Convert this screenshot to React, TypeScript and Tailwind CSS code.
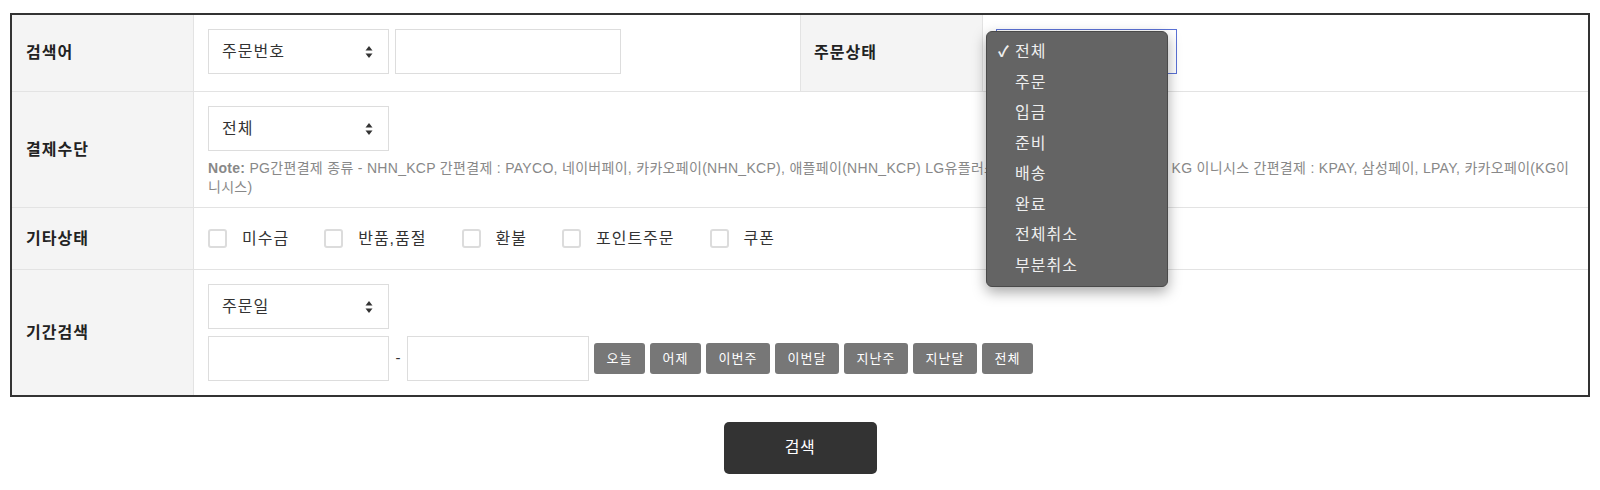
import React from "react";

function Arrows() {
  return (
    <svg width="8" height="14" viewBox="0 0 8 14" className="shrink-0">
      <path d="M0.5 5.5 L4 1 L7.5 5.5 Z" fill="#333" />
      <path d="M0.5 8.5 L4 13 L7.5 8.5 Z" fill="#333" />
    </svg>
  );
}

function FakeSelect({ value, focused }: { value: string; focused?: boolean }) {
  return (
    <div
      className={
        focused
          ? "w-[181px] h-[45px] shrink-0 border border-[#5b72d6] bg-white"
          : "w-[181px] h-[45px] shrink-0 border border-[#dddddd] bg-white flex items-center justify-between pl-[13px] pr-[15px] text-[16px] tracking-[1px] text-[#333]"
      }
    >
      {focused ? null : (
        <>
          <span>{value}</span>
          <Arrows />
        </>
      )}
    </div>
  );
}

function Label({ children, extra }: { children: React.ReactNode; extra?: string }) {
  return (
    <div
      className={
        "shrink-0 bg-[#f4f4f4] border-r border-[#e3e3e3] flex items-center font-bold text-[16px] tracking-[1px] text-[#222] " +
        (extra ?? "w-[182px] pl-[14px]")
      }
    >
      {children}
    </div>
  );
}

function Check({ label }: { label: string }) {
  return (
    <div className="flex items-center">
      <span className="w-[19px] h-[19px] border-2 border-[#dcdcdc] rounded-[3px] bg-white" />
      <span className="ml-[15px] text-[16px] tracking-[1px] text-[#333]">{label}</span>
    </div>
  );
}

const statusItems = ["전체", "주문", "입금", "준비", "배송", "완료", "전체취소", "부분취소"];
const quickButtons = [
  { t: "오늘", w: "w-[51px]" },
  { t: "어제", w: "w-[51px]" },
  { t: "이번주", w: "w-[64px]" },
  { t: "이번달", w: "w-[64px]" },
  { t: "지난주", w: "w-[64px]" },
  { t: "지난달", w: "w-[64px]" },
  { t: "전체", w: "w-[51px]" },
];

export default function App() {
  return (
    <div className="w-[1600px] h-[490px] bg-white px-[10px] pt-[13px] font-['Liberation_Sans','Noto_Sans_CJK_KR',sans-serif]">
      <div className="border-2 border-[#333]">
        {/* Row 1 */}
        <div className="flex h-[77px] border-b border-[#e3e3e3]">
          <Label>검색어</Label>
          <div className="w-[606px] shrink-0 pl-[14px] pt-[14px] flex items-start gap-[6px]">
            <FakeSelect value="주문번호" />
            <div className="w-[226px] h-[45px] border border-[#dddddd] bg-white" />
          </div>
          <Label extra="w-[183px] pl-[13px] border-l">주문상태</Label>
          <div className="flex-1 pl-[13px] pt-[14px]">
            <div className="relative w-[181px]">
              <FakeSelect value="전체" focused />
              <div className="absolute left-[-10px] top-[2px] z-10 w-[182px] rounded-[6px] border border-[#4a4a4a] bg-[#646464] py-[5px] shadow-[0_5px_14px_rgba(0,0,0,0.35)]">
                {statusItems.map((s, i) => (
                  <div key={s} className="relative h-[30.5px] flex items-center pl-[28px] text-[16px] tracking-[1px] text-[#efefef]">
                    {i === 0 ? (
                      <span className="absolute left-[11px] text-[15px] font-bold text-[#efefef]">✓</span>
                    ) : null}
                    {s}
                  </div>
                ))}
              </div>
            </div>
          </div>
        </div>

        {/* Row 2 */}
        <div className="flex h-[116px] border-b border-[#e3e3e3]">
          <Label>결제수단</Label>
          <div className="flex-1 pl-[14px] pt-[14px]">
            <FakeSelect value="전체" />
            <div className="mt-[8px] text-[14px] leading-[19px] tracking-[0.3px] text-[#888888]">
              <div className="whitespace-nowrap">
                <span className="font-bold">Note:</span> PG간편결제 종류 - NHN_KCP 간편결제 : PAYCO, 네이버페이, 카카오페이(NHN_KCP), 애플페이(NHN_KCP) LG유플러스 간편결제 : 페이나우, 페이코 KG 이니시스 간편결제 : KPAY, 삼성페이, LPAY, 카카오페이(KG이
              </div>
              <div>니시스)</div>
            </div>
          </div>
        </div>

        {/* Row 3 */}
        <div className="flex h-[62px] border-b border-[#e3e3e3]">
          <Label>기타상태</Label>
          <div className="flex-1 pl-[14px] flex items-center gap-[35px]">
            <Check label="미수금" />
            <Check label="반품,품절" />
            <Check label="환불" />
            <Check label="포인트주문" />
            <Check label="쿠폰" />
          </div>
        </div>

        {/* Row 4 */}
        <div className="flex h-[125px]">
          <Label>기간검색</Label>
          <div className="flex-1 pl-[14px] pt-[14px]">
            <FakeSelect value="주문일" />
            <div className="mt-[7px] flex items-center">
              <div className="w-[181px] h-[45px] border border-[#dddddd] bg-white" />
              <span className="w-[18px] text-center text-[15px] text-[#333]">-</span>
              <div className="w-[182px] h-[45px] border border-[#dddddd] bg-white" />
              <div className="ml-[5px] flex gap-[5px]">
                {quickButtons.map((b) => (
                  <button
                    key={b.t}
                    className={b.w + " h-[31px] rounded-[3px] bg-[#777777] text-white text-[13px] tracking-[1px] flex items-center justify-center"}
                  >
                    {b.t}
                  </button>
                ))}
              </div>
            </div>
          </div>
        </div>
      </div>

      <div className="flex justify-center mt-[25px]">
        <button className="w-[153px] h-[52px] rounded-[5px] bg-[#333333] text-white text-[16px] tracking-[0.5px]">검색</button>
      </div>
    </div>
  );
}
